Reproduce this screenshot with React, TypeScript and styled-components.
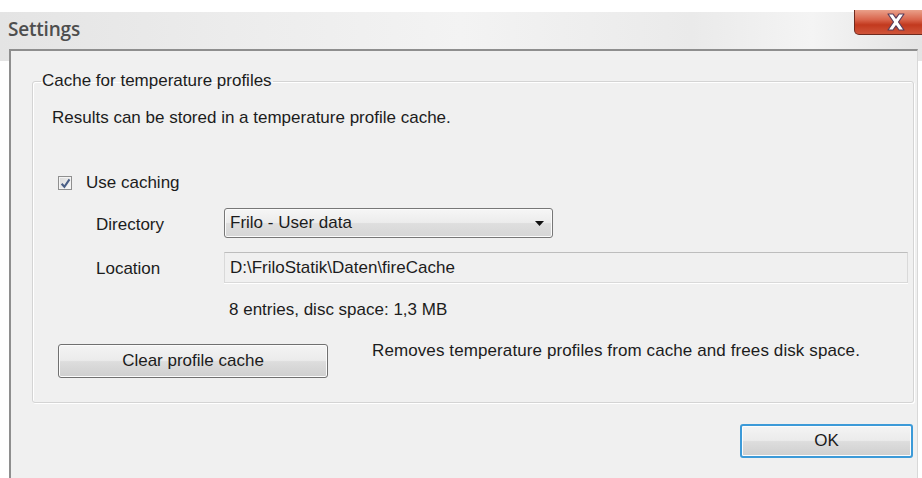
import React from "react";
import styled, { createGlobalStyle } from "styled-components";

const Global = createGlobalStyle`
  html, body { margin: 0; padding: 0; background: #ffffff; }
  body { font-family: "Liberation Sans", Arial, sans-serif; }
  * { box-sizing: border-box; }
`;

const Window = styled.div`
  width: 922px;
  height: 478px;
  display: flex;
  flex-direction: column;
  background: #ffffff;
  overflow: hidden;
`;

const TitleBar = styled.div`
  height: 49px;
  margin-top: 12px;
  display: flex;
  align-items: flex-start;
  justify-content: space-between;
  background: linear-gradient(
    to right,
    #e4e4e4 0%,
    #ececec 25%,
    #f3f3f3 50%,
    #eaeaea 75%,
    #f4f4f4 88%,
    #e4e4e4 100%
  );
`;

const Title = styled.div`
  font-family: "Open Sans", "Noto Sans", sans-serif;
  font-size: 19px;
  font-weight: 600;
  color: #4e4e4e;
  padding: 4px 0 0 8px;
  letter-spacing: -0.2px;
`;

const CloseButton = styled.div`
  width: 70px;
  height: 25px;
  margin-top: -2px;
  margin-right: -2px;
  border: 1px solid #6e2a1e;
  border-top: none;
  border-radius: 0 0 0 5px;
  background: linear-gradient(to bottom, #eaa08a 0%, #d9654c 40%, #c2391e 62%, #d0553a 100%);
  display: flex;
  align-items: center;
  justify-content: center;
  padding-left: 14px;
`;

const Client = styled.div`
  flex: 1;
  margin-left: 9px;
  margin-right: 4px;
  margin-top: -12px;
  border-top: 2px solid #8e8e8e;
  border-left: 2px solid #8e8e8e;
  border-right: 1px solid #d8d8d8;
  background: #f0f0f0;
  display: flex;
  flex-direction: column;
  padding: 20px 3px 0 21px;
`;

const Group = styled.fieldset`
  margin: 0;
  padding: 17px 0 0 0;
  height: 332px;
  border: 1px solid #d4d4d4;
  border-radius: 3px;
  box-shadow: inset 1px 1px 0 #ffffff, 1px 1px 0 #ffffff;
  display: flex;
  flex-direction: column;
  color: #1c1c1c;
  font-size: 17px;
`;

const Legend = styled.legend`
  padding: 0 1px;
  margin-left: 8px;
  font-size: 17px;
  line-height: 20px;
  color: #1c1c1c;
`;

const Intro = styled.div`
  padding-left: 19px;
  height: 20px;
  line-height: 20px;
`;

const CheckRow = styled.label`
  display: flex;
  align-items: center;
  gap: 14px;
  padding-left: 25px;
  margin-top: 45px;
  height: 20px;
`;

const Box = styled.span`
  width: 14px;
  height: 14px;
  border: 1px solid #8f8f8f;
  background: linear-gradient(to bottom right, #d8d8d8, #fafafa);
  box-shadow: inset 0 0 0 1px #f4f4f4;
  display: flex;
  align-items: center;
  justify-content: center;
`;

const Fields = styled.div`
  display: grid;
  grid-template-columns: 128px 1fr;
  row-gap: 14px;
  align-items: center;
  padding-left: 63px;
  padding-right: 5px;
  margin-top: 15px;
`;

const FieldLabel = styled.div`
  padding-top: 3px;
`;

const Combo = styled.div`
  width: 329px;
  height: 30px;
  border: 1px solid #777777;
  border-radius: 3px;
  background: linear-gradient(to bottom, #f6f6f6 0%, #ececec 48%, #dedede 52%, #d6d6d6 100%);
  box-shadow: inset 0 0 0 1px #fbfbfb;
  display: flex;
  align-items: center;
  justify-content: space-between;
  padding: 0 8px 0 5px;
`;

const TextBox = styled.div`
  height: 31px;
  border: 1px solid #d9d9d9;
  border-top-color: #bdbdbd;
  background: #f0f0f0;
  box-shadow: 0 1px 0 #ffffff;
  display: flex;
  align-items: center;
  padding-left: 5px;
`;

const Stats = styled.div`
  padding-left: 196px;
  margin-top: 17px;
  height: 20px;
  line-height: 20px;
`;

const ActionRow = styled.div`
  display: flex;
  align-items: flex-start;
  gap: 44px;
  padding-left: 25px;
  margin-top: 24px;
`;

const PushButton = styled.button<{ $default?: boolean }>`
  font-family: "Liberation Sans", Arial, sans-serif;
  font-size: 17px;
  color: #1c1c1c;
  height: 34px;
  border-radius: 3px;
  border: ${(p) => (p.$default ? "2px solid #3c9ad8" : "1px solid #707070")};
  background: linear-gradient(to bottom, #f4f4f4 0%, #ebebeb 48%, #dddddd 52%, #cfcfcf 100%);
  box-shadow: inset 0 0 0 1px #fcfcfc;
  padding: 0;
`;

const ClearButton = styled(PushButton)`
  width: 270px;
`;

const Hint = styled.div`
  margin-top: -3px;
  line-height: 20px;
  letter-spacing: 0.1px;
`;

const Footer = styled.div`
  display: flex;
  justify-content: flex-end;
  padding-right: 1px;
  margin-top: 21px;
`;

const OkButton = styled(PushButton)`
  width: 173px;
`;

export default function App() {
  return (
    <>
      <Global />
      <Window>
        <TitleBar>
          <Title>Settings</Title>
          <CloseButton>
            <svg width="20" height="18" viewBox="0 0 20 18">
              <path
                d="M2 1h5l3 4.2L13 1h5l-5.5 8 5.5 8h-5l-3-4.2L7 17H2l5.5-8z"
                fill="#ffffff"
                stroke="#5a3d5a"
                strokeWidth="1.2"
                strokeLinejoin="round"
              />
            </svg>
          </CloseButton>
        </TitleBar>
        <Client>
          <Group>
            <Legend>Cache for temperature profiles</Legend>
            <Intro>Results can be stored in a temperature profile cache.</Intro>
            <CheckRow>
              <Box>
                <svg width="11" height="11" viewBox="0 0 10 10">
                  <path d="M1.5 5.2 4 8 8.6 1.3" fill="none" stroke="#4a5f86" strokeWidth="1.9" />
                </svg>
              </Box>
              <span>Use caching</span>
            </CheckRow>
            <Fields>
              <FieldLabel>Directory</FieldLabel>
              <Combo>
                <span>Frilo - User data</span>
                <svg width="9" height="5" viewBox="0 0 9 5">
                  <path d="M0 0h9L4.5 5z" fill="#111111" />
                </svg>
              </Combo>
              <FieldLabel>Location</FieldLabel>
              <TextBox>D:\FriloStatik\Daten\fireCache</TextBox>
            </Fields>
            <Stats>8 entries, disc space: 1,3 MB</Stats>
            <ActionRow>
              <ClearButton>Clear profile cache</ClearButton>
              <Hint>Removes temperature profiles from cache and frees disk space.</Hint>
            </ActionRow>
          </Group>
          <Footer>
            <OkButton $default>OK</OkButton>
          </Footer>
        </Client>
      </Window>
    </>
  );
}
